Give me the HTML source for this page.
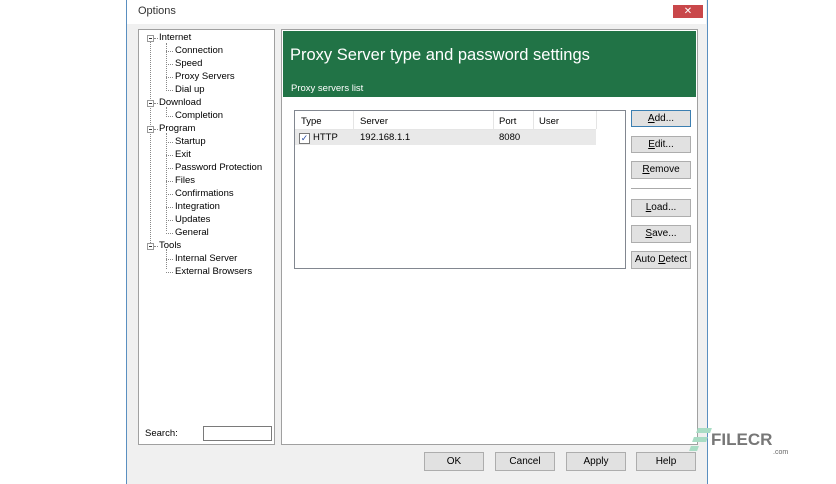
<!DOCTYPE html>
<html><head><style>
body{margin:0;width:836px;height:484px;background:#fff;position:relative;font-family:"Liberation Sans",Arial,sans-serif;font-size:10px;color:#000;overflow:hidden}
.a{position:absolute}
.win{left:126px;top:0;width:580px;height:484px;background:#f0f0f0;border-left:1px solid #5a8fc0;border-right:1px solid #5a8fc0}
.btn{position:absolute;background:#e1e1e1;border:1px solid #adadad;text-align:center;font-size:10px;line-height:16px;box-sizing:border-box}
.t{position:absolute;font-size:9.5px;white-space:nowrap}
.hl{position:absolute;border-top:1px dotted #888}
.vl{position:absolute;border-left:1px dotted #888}
.ex{position:absolute;width:7px;height:7px;border:1px solid #999;background:#fff;box-sizing:border-box}
.ex:after{content:"";position:absolute;left:1px;top:2px;width:3px;height:1px;background:#333}
</style></head><body>
<div class="a win"></div>
<div class="a" style="left:127px;top:0;width:579px;height:24px;background:#fff"></div>
<div class="t" style="left:138px;top:5px;font-size:11px;color:#333">Options</div>
<div class="a" style="left:673px;top:5px;width:30px;height:13px;background:#c9474a;color:#fff;text-align:center;font-size:10px;line-height:13px">✕</div>

<div class="a" style="left:138px;top:29px;width:135px;height:414px;background:#fff;border:1px solid #a0a0a0"></div>
<div class="vl" style="left:150px;top:41px;height:204px"></div>
<div class="vl" style="left:166px;top:43px;height:46px"></div>
<div class="vl" style="left:166px;top:107px;height:8px"></div>
<div class="vl" style="left:166px;top:133px;height:98px"></div>
<div class="vl" style="left:166px;top:249px;height:20px"></div>
<div id="tree"></div>
<script>
var items=[["Internet",0],["Connection",1],["Speed",1],["Proxy Servers",1],["Dial up",1],["Download",0],["Completion",1],["Program",0],["Startup",1],["Exit",1],["Password Protection",1],["Files",1],["Confirmations",1],["Integration",1],["Updates",1],["General",1],["Tools",0],["Internal Server",1],["External Browsers",1]];
var h="";items.forEach(function(it,i){var y=32+i*13;
if(it[1]==0){h+='<div class="ex" style="left:147px;top:'+(y+3)+'px"></div><div class="hl" style="left:154px;top:'+(y+6)+'px;width:4px"></div><div class="t" style="left:159px;top:'+y+'px">'+it[0]+'</div>';}
else{h+='<div class="hl" style="left:166px;top:'+(y+6)+'px;width:7px"></div><div class="t" style="left:175px;top:'+y+'px">'+it[0]+'</div>';}});
document.getElementById("tree").innerHTML=h;
</script>
<div class="t" style="left:145px;top:428px">Search:</div>
<div class="a" style="left:203px;top:426px;width:67px;height:13px;background:#fff;border:1px solid #7a7a7a"></div>

<div class="a" style="left:281px;top:29px;width:415px;height:414px;background:#fff;border:1px solid #a0a0a0"></div>
<div class="a" style="left:283px;top:31px;width:413px;height:66px;background:#217346"></div>
<div class="t" style="left:290px;top:46px;font-size:16.5px;color:#fff">Proxy Server type and password settings</div>
<div class="t" style="left:291px;top:83px;color:#fff">Proxy servers list</div>

<div class="a" style="left:294px;top:110px;width:330px;height:157px;background:#fff;border:1px solid #828790"></div>
<div class="a" style="left:295px;top:111px;width:301px;height:18px;border-bottom:1px solid #e5e5e5"></div>
<div class="a" style="left:353px;top:111px;height:18px;border-left:1px solid #e5e5e5"></div>
<div class="a" style="left:493px;top:111px;height:18px;border-left:1px solid #e5e5e5"></div>
<div class="a" style="left:533px;top:111px;height:18px;border-left:1px solid #e5e5e5"></div>
<div class="a" style="left:596px;top:111px;height:18px;border-left:1px solid #e5e5e5"></div>
<div class="a" style="left:295px;top:130px;width:301px;height:15px;background:#e9e9e9"></div>
<div class="t" style="left:301px;top:116px">Type</div>
<div class="t" style="left:360px;top:116px">Server</div>
<div class="t" style="left:499px;top:116px">Port</div>
<div class="t" style="left:539px;top:116px">User</div>
<div class="a" style="left:299px;top:133px;width:9px;height:9px;border:1px solid #777;background:#fff;font-size:9px;line-height:9px;color:#2a4ea0;text-align:center">✓</div>
<div class="t" style="left:313px;top:132px">HTTP</div>
<div class="t" style="left:360px;top:132px">192.168.1.1</div>
<div class="t" style="left:499px;top:132px">8080</div>

<div class="btn" style="left:631px;top:110px;width:60px;height:17px;border-color:#3c7fb1"><u>A</u>dd...</div>
<div class="btn" style="left:631px;top:136px;width:60px;height:17px"><u>E</u>dit...</div>
<div class="btn" style="left:631px;top:161px;width:60px;height:18px"><u>R</u>emove</div>
<div class="a" style="left:631px;top:188px;width:60px;border-top:1px solid #aaa"></div>
<div class="btn" style="left:631px;top:199px;width:60px;height:18px"><u>L</u>oad...</div>
<div class="btn" style="left:631px;top:225px;width:60px;height:18px"><u>S</u>ave...</div>
<div class="btn" style="left:631px;top:251px;width:60px;height:18px">Auto <u>D</u>etect</div>

<div class="btn" style="left:424px;top:452px;width:60px;height:19px;line-height:18px">OK</div>
<div class="btn" style="left:495px;top:452px;width:60px;height:19px;line-height:18px">Cancel</div>
<div class="btn" style="left:566px;top:452px;width:60px;height:19px;line-height:18px">Apply</div>
<div class="btn" style="left:636px;top:452px;width:60px;height:19px;line-height:18px">Help</div>

<div class="a" style="left:697px;top:428px;width:14px;height:5px;background:#a8dcc4;transform:skewX(-20deg)"></div>
<div class="a" style="left:693px;top:437px;width:14px;height:5px;background:#a8dcc4;transform:skewX(-20deg)"></div>
<div class="a" style="left:690px;top:446px;width:8px;height:5px;background:#a8dcc4;transform:skewX(-20deg)"></div>
<div class="t" style="left:711px;top:430px;font-size:17px;font-weight:bold;color:#777">FILECR</div>
<div class="t" style="left:773px;top:449px;font-size:7px;color:#666">.com</div>
</body></html>
